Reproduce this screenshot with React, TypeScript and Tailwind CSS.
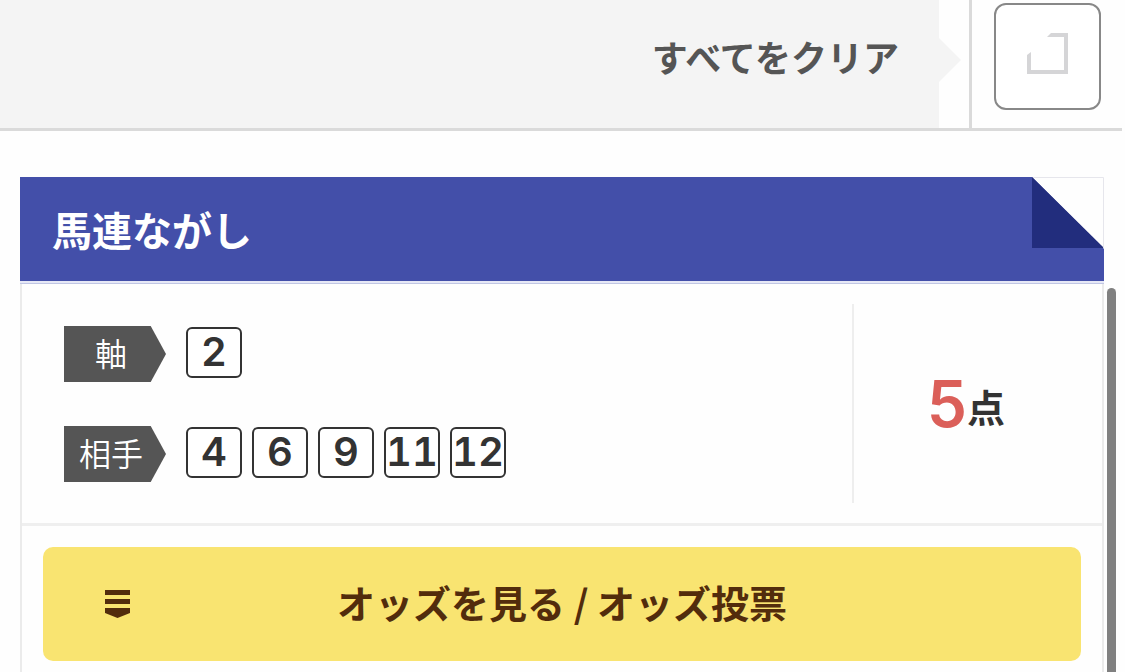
import React from "react";

const partners = [4, 6, 9, 11, 12];

function NumberBox({ value }: { value: number }) {
  return (
    <li className="flex h-[51px] w-14 items-center justify-center rounded-md border-2 border-[#333] bg-white font-[Inter,sans-serif] text-[40px] leading-none font-semibold tabular-nums text-[#333]">
      {value}
    </li>
  );
}

function PickRow({ label, values }: { label: string; values: number[] }) {
  return (
    <div className="flex items-center gap-5">
      <dt className="flex h-14 w-[102px] items-center bg-[#555] pr-2 pb-1 text-[32px] leading-none font-[350] text-white [clip-path:polygon(0_0,85%_0,100%_50%,85%_100%,0_100%)]">
        <span className="w-full text-center">{label}</span>
      </dt>
      <dd className="pb-1">
        <ul className="flex gap-[10px]">
          {values.map((v) => (
            <NumberBox key={v} value={v} />
          ))}
        </ul>
      </dd>
    </div>
  );
}

export default function App() {
  return (
    <div className="flex min-h-screen flex-col bg-[#fefefe] font-['Noto_Sans_CJK_JP',sans-serif] text-[#333]">
      <header className="mr-[3px] flex h-[131px] border-b-[3px] border-[#dadada]">
        <button
          type="button"
          className="flex-1 bg-[#f4f4f4] pr-10 pb-4 text-right text-4xl font-bold text-[#555]"
        >
          すべてをクリア
        </button>
        <div className="flex w-[30px] items-center pb-2">
          <svg width="22" height="44" viewBox="0 0 22 44" fill="#f4f4f4" aria-hidden="true">
            <path d="M0 0L22 22L0 44Z" />
          </svg>
        </div>
        <div className="flex w-[153px] items-start border-l-[3px] border-[#dadada] pt-[3px] pl-[22px]">
          <button
            type="button"
            aria-label="選択"
            className="flex size-[107px] items-center justify-center rounded-xl border-2 border-[#888] bg-white pb-1.5"
          >
            <svg width="41" height="41" viewBox="0 0 41 41" fill="#d5d5d7" aria-hidden="true">
              <path d="M24 0H41V41H0V22L4 19V37H37V4H20Z" />
            </svg>
          </button>
        </div>
      </header>

      <main className="mt-[46px] flex flex-1 pr-[9px] pl-5">
        <section className="flex flex-1 flex-col">
          <div className="flex h-[104px] justify-between bg-[#434fa9]">
            <h2 className="flex items-center pl-8 text-[40px] leading-none font-bold text-white">
              馬連ながし
            </h2>
            <svg width="72" height="72" viewBox="0 0 72 72" aria-hidden="true">
              <path d="M0 0H72V72Z" fill="#fefefe" />
              <path d="M0 0V71H72Z" fill="#222d7d" />
              <path d="M1 .5H71.5V71" fill="none" stroke="#e6e6ec" />
            </svg>
          </div>
          <div className="h-[3px] border-b border-[#c0c6e4] bg-[#e6e8f6]" />
          <div className="flex-1 border-x-2 border-[#ebebeb]">
            <div className="flex border-b-[3px] border-[#efefef] py-5">
              <dl className="flex flex-1 flex-col gap-11 pt-[22px] pb-[21px] pl-[42px]">
                <PickRow label="軸" values={[2]} />
                <PickRow label="相手" values={partners} />
              </dl>
              <p className="flex w-[250px] items-center justify-center border-l-2 border-[#eee] pr-6">
                <span className="flex items-center">
                  <span className="font-[Inter,sans-serif] text-[64px] leading-none font-semibold text-[#db5f59]">
                    5
                  </span>
                  <span className="pt-1 text-[38px] leading-none font-bold">点</span>
                </span>
              </p>
            </div>
            <div className="px-[21px] pt-[21px] pb-[11px]">
              <button
                type="button"
                className="grid h-[114px] w-full grid-cols-[62px_1fr_62px] items-center rounded-[10px] bg-[#f9e471] text-[38px] leading-none font-bold text-[#522c0c]"
              >
                <svg
                  className="ml-[62px]"
                  width="25"
                  height="28"
                  viewBox="0 0 25 28"
                  fill="currentColor"
                  aria-hidden="true"
                >
                  <path d="M0 0H25V5H0ZM0 9H25V14H0ZM0 18H25V23L12.5 28L0 23Z" />
                </svg>
                <span className="pb-1">オッズを見る / オッズ投票</span>
              </button>
            </div>
          </div>
        </section>
        <div className="mt-[111px] ml-[3px] w-[9px] rounded-t-full bg-[#808080]" />
      </main>
    </div>
  );
}
